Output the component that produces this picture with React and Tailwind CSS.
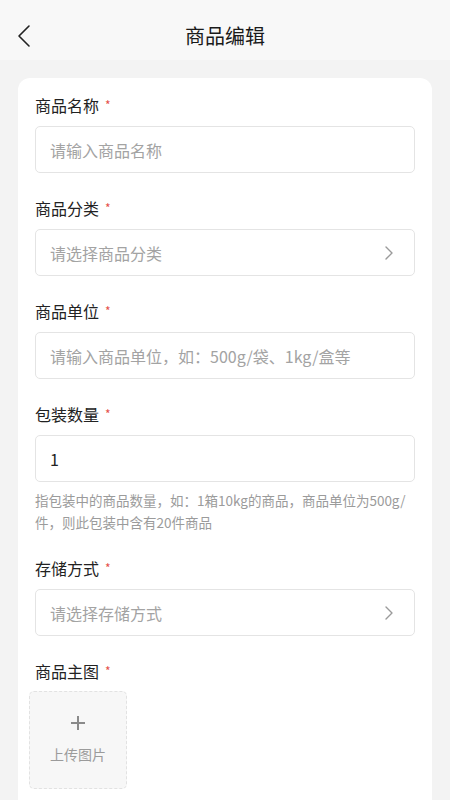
import React from "react";

const font = { fontFamily: '"Noto Sans CJK SC", "Noto Sans", sans-serif' };

function Label({ children }) {
  return (
    <div className="flex h-[22px] items-center text-[16px] leading-[22px] text-[#222]">
      {children}
      <span className="ml-[6px] text-[12px] text-[#e5504a]">*</span>
    </div>
  );
}

function Chevron() {
  return (
    <svg width="10" height="16" viewBox="0 0 10 16" fill="none">
      <path d="M2 2l6 6-6 6" stroke="#9a9a9a" strokeWidth="1.4" strokeLinecap="round" strokeLinejoin="round" />
    </svg>
  );
}

function Field({ label, placeholder, value, select }) {
  return (
    <div className="flex flex-col">
      <Label>{label}</Label>
      <div className="mt-[10px] flex h-[47px] items-center justify-between rounded-[5px] border border-[#e4e4e4] bg-white pl-[14px] pr-[20px] text-[16px]">
        {value ? (
          <span className="text-[#222]">{value}</span>
        ) : (
          <span className="text-[#a3a3a3]">{placeholder}</span>
        )}
        {select && <Chevron />}
      </div>
    </div>
  );
}

export default function App() {
  return (
    <div className="min-h-[800px] bg-[#f3f3f3]" style={font}>
      <div className="relative flex h-[60px] items-center justify-center bg-[#f8f8f8] pt-[11px]">
        <svg className="absolute left-[16px] top-[24px]" width="16" height="24" viewBox="0 0 16 24" fill="none">
          <path d="M13 2L3 12l10 10" stroke="#222" strokeWidth="1.6" strokeLinecap="round" strokeLinejoin="round" />
        </svg>
        <h1 className="text-[20px] font-normal leading-[24px] text-[#1a1a1a]">商品编辑</h1>
      </div>

      <div className="mx-[18px] mt-[18px] rounded-t-[12px] bg-white px-[17px] pb-[16px] pt-[16px]">
        <div className="flex flex-col gap-[24px]">
          <Field label="商品名称" placeholder="请输入商品名称" />
          <Field label="商品分类" placeholder="请选择商品分类" select />
          <Field label="商品单位" placeholder="请输入商品单位，如：500g/袋、1kg/盒等" />
          <div className="flex flex-col">
            <Field label="包装数量" value="1" />
            <p className="mt-[7px] text-[13.5px] leading-[22px] text-[#9b9b9b]">
              指包装中的商品数量，如：1箱10kg的商品，商品单位为500g/件，则此包装中含有20件商品
            </p>
          </div>
          <Field label="存储方式" placeholder="请选择存储方式" select />
          <div className="flex flex-col">
            <Label>商品主图</Label>
            <div className="-ml-[6px] mt-[9px] flex h-[98px] w-[98px] flex-col items-center justify-center rounded-[5px] border border-dashed border-[#e2e2e2] bg-[#f7f7f7]">
              <svg width="14" height="14" viewBox="0 0 14 14" fill="none">
                <path d="M7 0v14M0 7h14" stroke="#8a8a8a" strokeWidth="2" />
              </svg>
              <span className="mt-[14px] text-[14px] text-[#9b9b9b]">上传图片</span>
            </div>
          </div>
        </div>
      </div>
    </div>
  );
}
